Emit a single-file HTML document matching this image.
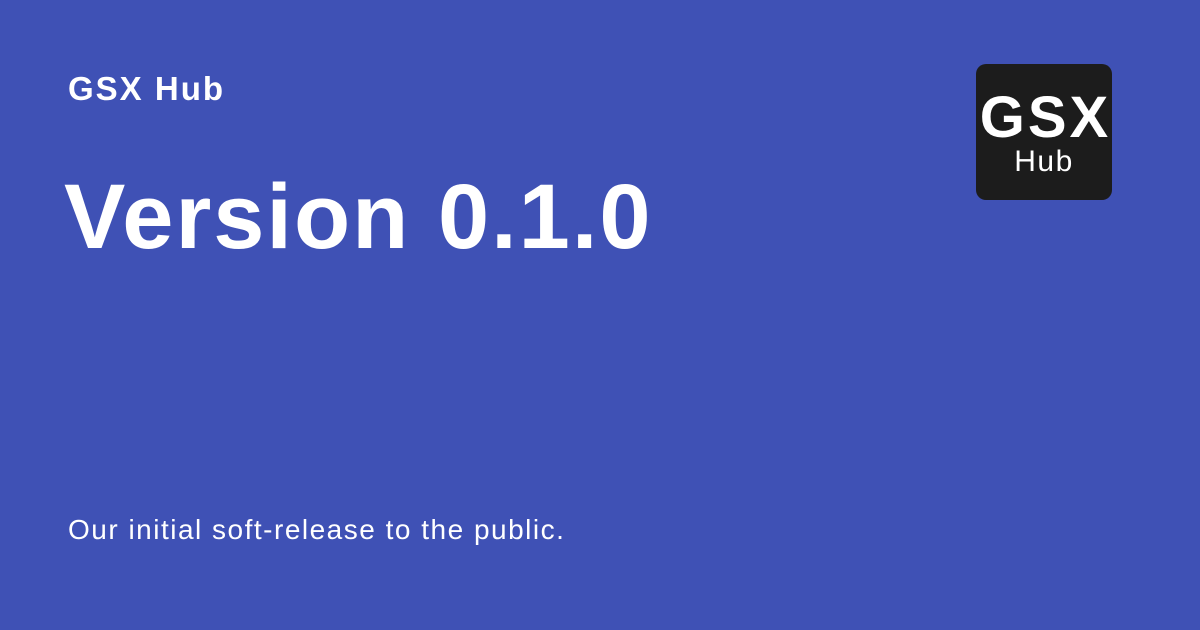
<!DOCTYPE html>
<html><head><meta charset="utf-8"><style>
body{margin:0;width:1200px;height:630px;background:#3f51b5;font-family:"Liberation Sans",sans-serif;color:#fff;position:relative;overflow:hidden}
.t{position:absolute;left:68px;top:70px;font-size:33px;font-weight:bold;letter-spacing:2px}
.v{position:absolute;left:64px;top:165px;font-size:92px;font-weight:bold;letter-spacing:2px}
.d{position:absolute;left:68px;top:514px;font-size:28px;letter-spacing:1.5px}
.logo{position:absolute;left:976px;top:64px;width:136px;height:136px;background:#1c1c1c;border-radius:10px;text-align:center}
.l1{position:absolute;left:0;right:0;top:25px;font-size:58px;font-weight:bold;line-height:1;letter-spacing:3px;padding-left:3px}
.l2{position:absolute;left:0;right:0;top:83px;font-size:30px;line-height:1;letter-spacing:1.5px}
</style></head><body>
<div class="t">GSX Hub</div>
<div class="v">Version 0.1.0</div>
<div class="d">Our initial soft-release to the public.</div>
<div class="logo"><div class="l1">GSX</div><div class="l2">Hub</div></div>
</body></html>
